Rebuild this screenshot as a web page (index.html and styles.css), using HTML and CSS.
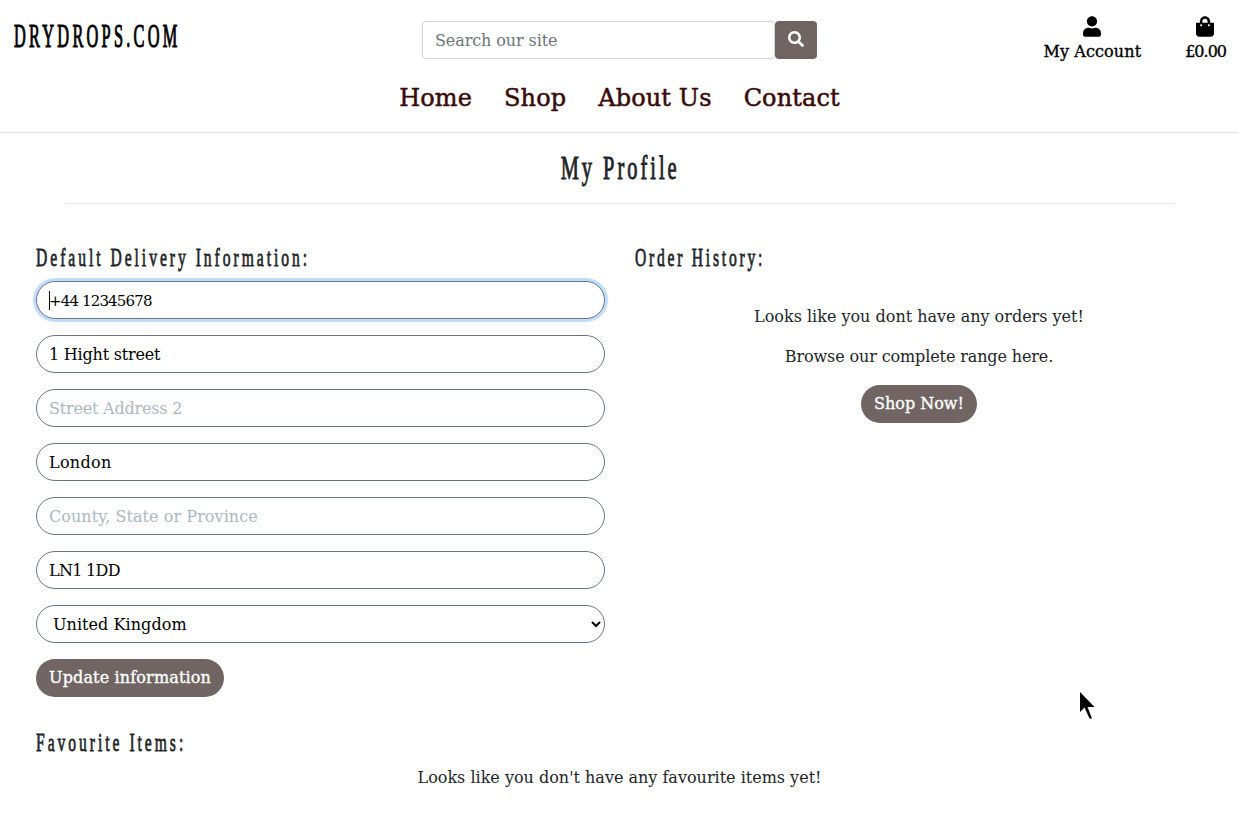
FILE: index.html
```
<!DOCTYPE html>
<html lang="en">
<head>
<meta charset="utf-8">
<title>Drydrops.com - My Profile</title>
<link rel="stylesheet" href="styles.css">
</head>
<body>
<header class="site-header">
  <div class="topbar">
    <a class="brand"><span class="display brand-text">DRYDROPS.COM</span></a>
    <form class="search">
      <input class="search-input" type="text" placeholder="Search our site">
      <button class="search-button" type="button" aria-label="Search">
        <svg width="16" height="16" viewBox="0 0 512 512"><path fill="currentColor" d="M505 442.7L405.300 343c-4.500-4.500-10.600-7-17-7H372c27.600-35.300 44-79.700 44-128C416 93.100 322.900 0 208 0S0 93.100 0 208s93.100 208 208 208c48.300 0 92.700-16.400 128-44v16.300c0 6.400 2.500 12.500 7 17l99.700 99.700c9.400 9.400 24.600 9.400 33.900 0l28.300-28.300c9.400-9.400 9.400-24.600.1-34zM208 336c-70.700 0-128-57.200-128-128 0-70.700 57.200-128 128-128 70.700 0 128 57.200 128 128 0 70.700-57.200 128-128 128z"/></svg>
      </button>
    </form>
    <div class="account">
      <a class="account-link">
        <svg width="18" height="21" viewBox="0 0 448 512"><path fill="currentColor" d="M224 256c70.700 0 128-57.300 128-128S294.700 0 224 0 96 57.300 96 128s57.300 128 128 128zm89.600 32h-16.700c-22.200 10.200-46.900 16-72.900 16s-50.600-5.800-72.900-16h-16.700C60.200 288 0 348.200 0 422.400V464c0 26.500 21.500 48 48 48h352c26.500 0 48-21.500 48-48v-41.600c0-74.200-60.200-134.400-134.400-134.400z"/></svg>
        <span>My Account</span>
      </a>
      <a class="account-link">
        <svg width="18" height="21" viewBox="0 0 448 512"><path fill="currentColor" d="M352 160v-32C352 57.420 294.579 0 224 0 153.420 0 96 57.420 96 128v32H0v272c0 44.183 35.817 80 80 80h288c44.183 0 80-35.817 80-80V160h-96zm-192-32c0-35.290 28.710-64 64-64s64 28.710 64 64v32H160v-32zm160 120c-13.255 0-24-10.745-24-24s10.745-24 24-24 24 10.745 24 24-10.745 24-24 24zm-192 0c-13.255 0-24-10.745-24-24s10.745-24 24-24 24 10.745 24 24-10.745 24-24 24z"/></svg>
        <span class="total">£0.00</span>
      </a>
    </div>
  </div>
  <nav class="nav"><a>Home</a><a>Shop</a><a>About Us</a><a>Contact</a></nav>
</header>
<main>
  <div class="title"><h2><span class="display title-text">My Profile</span></h2></div>
  <div class="columns">
    <section>
      <h4><span class="display">Default Delivery Information:</span></h4>
      <form class="fields">
        <div class="phone">
          <input class="field focused digits" type="text" value="+44 12345678">
          <span class="caret"></span>
        </div>
        <input class="field street" type="text" value="1 Hight street">
        <input class="field street" type="text" placeholder="Street Address 2">
        <input class="field town" type="text" value="London">
        <input class="field county" type="text" placeholder="County, State or Province">
        <input class="field postcode" type="text" value="LN1 1DD">
        <select class="field county"><option>United Kingdom</option></select>
        <button class="pill update" type="button">Update information</button>
      </form>
    </section>
    <section>
      <h4><span class="display orders-heading">Order History:</span></h4>
      <div class="orders">
        <p>Looks like you dont have any orders yet!</p>
        <p class="browse">Browse our complete range here.</p>
        <a class="pill">Shop Now!</a>
      </div>
    </section>
  </div>
  <section class="favourites">
    <h4><span class="display">Favourite Items:</span></h4>
    <p>Looks like you don't have any favourite items yet!</p>
  </section>
</main>
<svg class="pointer" width="17" height="30" viewBox="0 0 17 30"><path d="M1 1v20l4.500-4.500 5 11h2.500l-4.500-11.500h7z"/></svg>
</body>
</html>
```
FILE: styles.css
```
* { box-sizing: border-box; }
body {
  margin: 0;
  height: 813px;
  overflow: hidden;
  background: #fff;
  color: #212529;
  font: 16px/24px "DejaVu Serif", serif;
}
h2, h4, p { margin: 0; font-weight: 400; }
.display {
  display: inline-block;
  font-family: "Liberation Serif", serif;
  white-space: nowrap;
  transform: scaleX(.6);
  transform-origin: 0 50%;
  letter-spacing: 4.950px;
  -webkit-text-stroke: .8px;
}
.site-header { height: 133px; border-bottom: 1px solid #dee2e6; }
.topbar {
  display: grid;
  grid-template-columns: 1fr 395px 1fr;
  height: 80px;
}
.brand { padding: 15px 0 0 14px; color: #000; font-size: 34px; line-height: 40px; overflow: hidden; }
.brand-text { transform: scaleX(.48); letter-spacing: 6.800px; -webkit-text-stroke: 1.200px; }
.search { display: flex; height: 38px; margin-top: 21px; }
.search-input {
  flex: 1;
  min-width: 0;
  border: 1px solid #ced4da;
  border-radius: 4px;
  padding: 7px 12px 5px;
  font: inherit;
  letter-spacing: -.1px;
  outline: 0;
}
.search-input::placeholder { color: #6c757d; opacity: 1; }
.search-button {
  width: 42px;
  padding: 0 0 3px;
  border: 0;
  border-radius: 4px;
  background: #706563;
  color: #fff;
}
.search-button svg { vertical-align: middle; }
.account {
  display: flex;
  justify-content: flex-end;
  gap: 44px;
  padding: 16px 14px 0 0;
  color: #000;
}
.account-link {
  display: flex;
  flex-direction: column;
  align-items: center;
  line-height: 24px;
  -webkit-text-stroke: .35px;
}
.account-link svg { margin-bottom: 3px; }
.account-link span { letter-spacing: .1px; }
.account-link .total { letter-spacing: -1px; margin-right: -1px; }
.nav {
  display: flex;
  justify-content: center;
  gap: 32px;
  color: #3a0a0a;
  font-size: 24px;
  line-height: 36px;
  letter-spacing: .12px;
  -webkit-text-stroke: .5px;
}
.title {
  height: 71px;
  margin: 0 64px 0 65px;
  padding-top: 15px;
  border-bottom: 1px solid #e5e5e5;
}
h2 { display: flex; justify-content: center; font-size: 34px; line-height: 40px; }
.title-text { transform: scaleX(.6); transform-origin: 50% 50%; letter-spacing: 5px; -webkit-text-stroke: 1px; }
.columns {
  display: grid;
  grid-template-columns: 569px 568px;
  gap: 30px;
  padding: 38px 0 0 36px;
}
h4 { font-size: 26px; line-height: 30px; height: 39px; overflow: hidden; }
.orders-heading { letter-spacing: 4.600px; }
.fields { display: flex; flex-direction: column; gap: 16px; align-items: flex-start; }
.phone { position: relative; width: 100%; height: 38px; }
.caret { position: absolute; left: 13px; top: 10px; width: 1px; height: 19px; background: #000; }
.field {
  display: block;
  width: 100%;
  height: 38px;
  border: 1px solid #6c757d;
  border-radius: 19px;
  padding: 6px 12px;
  background: #fff;
  color: #000;
  font: inherit;
  outline: 0;
}
.field::placeholder { color: #aab7c4; opacity: 1; }
.focused { box-shadow: 0 0 0 3px #bfdeff; }
.digits { padding-top: 7px; padding-bottom: 5px; font-size: 15px; letter-spacing: -.850px; }
.street { letter-spacing: -.2px; }
.town { letter-spacing: .3px; }
.county { letter-spacing: .06px; }
.postcode { letter-spacing: -.7px; }
.pill {
  display: inline-block;
  height: 38px;
  border: 0;
  border-radius: 19px;
  padding: 7px 13px;
  background: #706563;
  color: #fff;
  font: inherit;
  line-height: 24px;
  -webkit-text-stroke: .35px;
}
.update { letter-spacing: .15px; }
.orders { padding-top: 24px; text-align: center; }
.orders p { margin-bottom: 16px; }
.orders .browse { letter-spacing: -.12px; }
.favourites { padding: 30px 0 0 36px; }
.favourites p { margin-left: -36px; text-align: center; }
.pointer { position: absolute; left: 1079px; top: 691px; }
```
